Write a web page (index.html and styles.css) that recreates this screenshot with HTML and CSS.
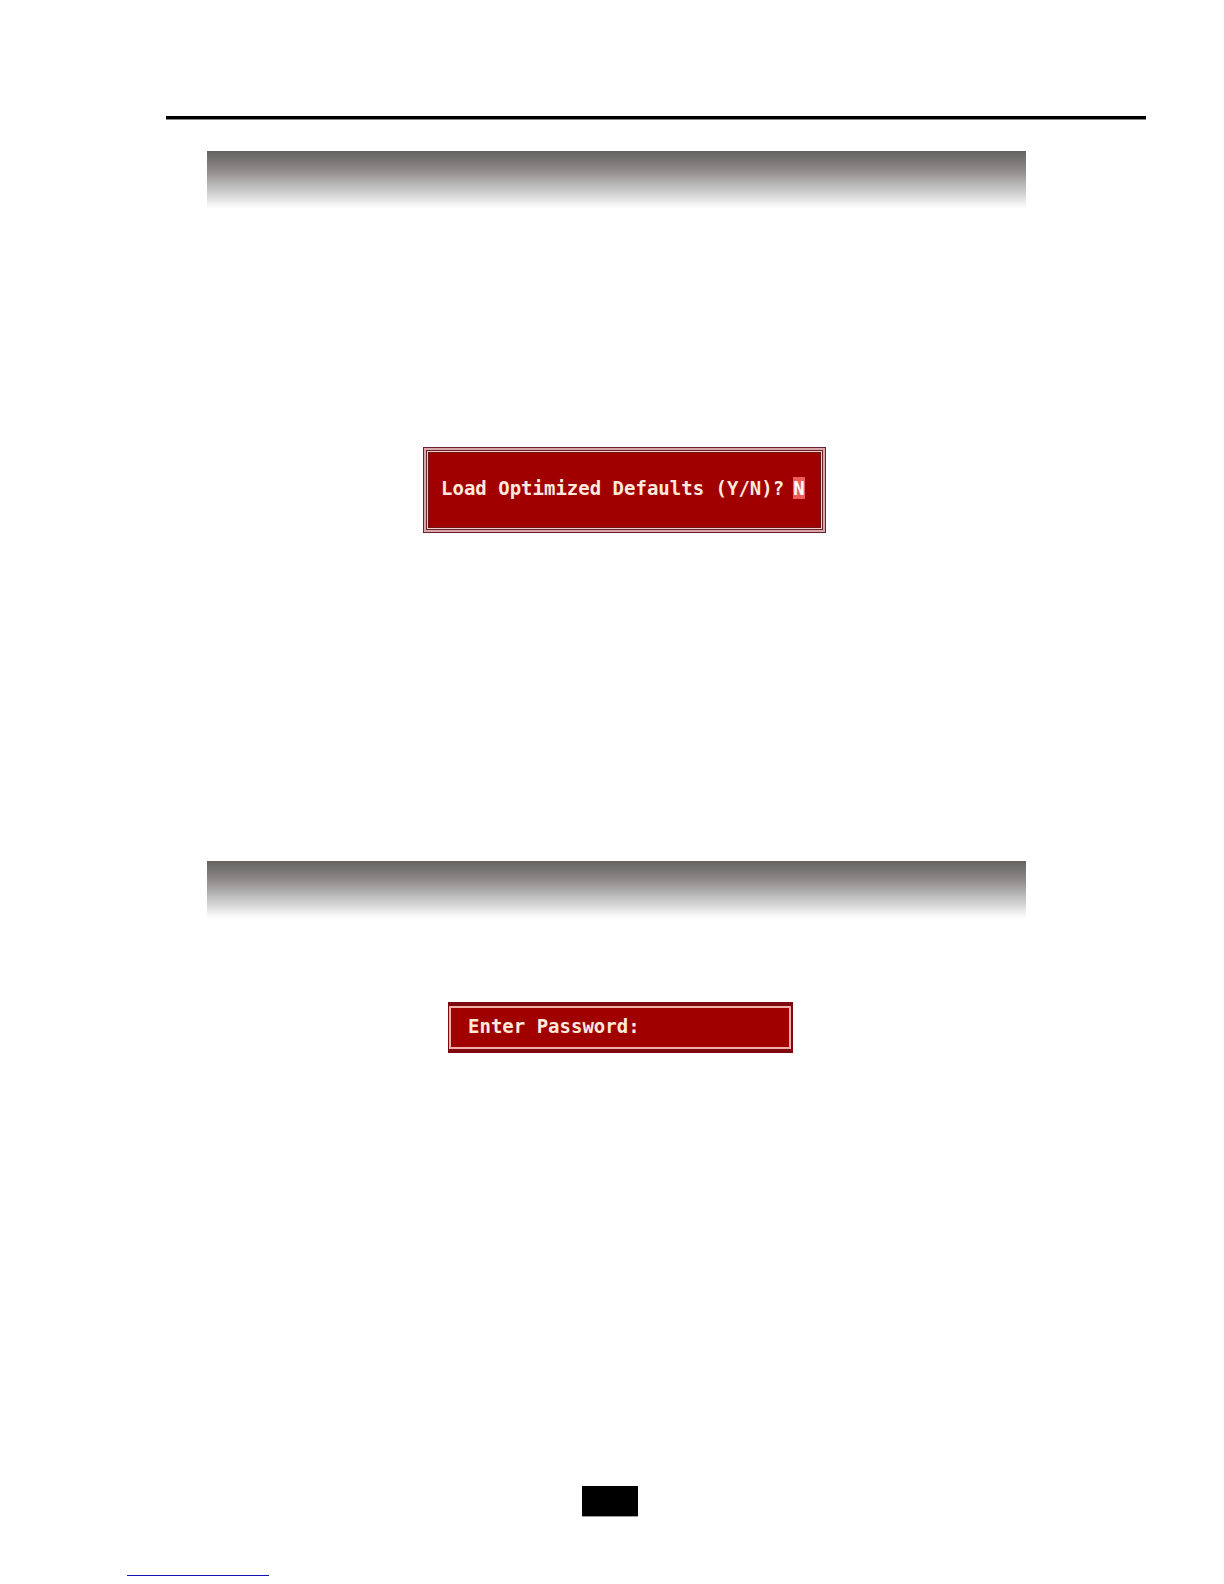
FILE: index.html
```html
<!DOCTYPE html>
<html lang="en">

<head>
    <meta charset="UTF-8" />
    <meta name="viewport" content="width=device-width, initial-scale=1" />
    <title>BIOS Setup</title>
    <link rel="stylesheet" href="styles.css">
</head>

<body>
    <main class="page">
        <hr class="top-rule" />

        <!-- Load Optimized Defaults -->
        <section class="section defaults">
            <div class="section-bar"></div>
            <form class="dialog dialog-defaults">
                <div class="dialog-frame">
                    <label for="confirm">Load Optimized Defaults (Y/N)?</label>
                    <input type="text" id="confirm" class="confirm-input" value="N" maxlength="1" />
                </div>
            </form>
        </section>

        <!-- Password -->
        <section class="section">
            <div class="section-bar"></div>
            <form class="dialog dialog-password">
                <div class="dialog-frame">
                    <label for="password">Enter Password:</label>
                    <input type="password" id="password" class="password-input" />
                </div>
            </form>
        </section>

        <footer class="footer">
            <div class="page-number"></div>
            <hr class="link-line" />
        </footer>
    </main>
</body>

</html>
```
FILE: styles.css
```css
* {
    margin: 0;
    padding: 0;
    box-sizing: border-box;
}

body {
    background-color: white;
    font-family: 'DejaVu Sans Mono', 'Liberation Mono', monospace;
}

.page {
    display: flex;
    flex-direction: column;
    min-height: 100vh;
    padding: 116px 78px 8px 127px;
}

.top-rule {
    height: 4px;
    margin-left: 39px;
    border: none;
    border-bottom: 1px solid #858585;
    background-color: black;
}

.section {
    margin: 0 120px 0 80px;
}

.defaults {
    min-height: 710px;
    margin-top: 31px;
}

.section-bar {
    height: 58px;
    background: linear-gradient(#646362, #8c8987 32%, #b4b4b4 56%, #d6d6d6 76%, #f0f0f0 90%, white);
}

/* BIOS prompts */
.dialog {
    width: fit-content;
    background-color: #a00000;
    color: #ffe8dc;
    font-size: 19px;
    font-weight: 700;
    line-height: 22px;
}

.dialog-frame {
    display: flex;
    align-items: flex-start;
}

.dialog input {
    border: none;
    outline: none;
    background: none;
    color: inherit;
    font: inherit;
}

/* double frame */
.dialog-defaults {
    margin: 238px 0 0 216px;
    padding: 2px;
    border: 1px solid #682030;
    background-color: #d8a8a8;
}

.dialog-defaults .dialog-frame {
    gap: 9px;
    padding: 26px 17px 30px 14px;
    border: 1px solid #682030;
    background-color: #a00000;
    box-shadow: inset 0 0 0 1px #f4d0c8, inset 0 0 0 2px #701018;
}

.dialog .confirm-input {
    width: 12px;
    background-color: #f05c5c;
    color: white;
}

/* single frame */
.dialog-password {
    margin: 83px 0 0 241px;
    padding: 4px 2px 4px 1px;
    background-color: #800810;
}

.dialog-password .dialog-frame {
    padding: 7px 10px 10px 17px;
    border: 2px solid #f0b0a8;
    background-color: #a00000;
}

.dialog .password-input {
    width: 139px;
}

.footer {
    margin-top: auto;
}

.page-number {
    width: 56px;
    height: 31px;
    margin-left: 455px;
    border-bottom: 1px solid #a0a0a0;
    background-color: black;
}

.link-line {
    width: 142px;
    margin-top: 58px;
    border: none;
    border-top: 1px solid #1414b4;
}
```
